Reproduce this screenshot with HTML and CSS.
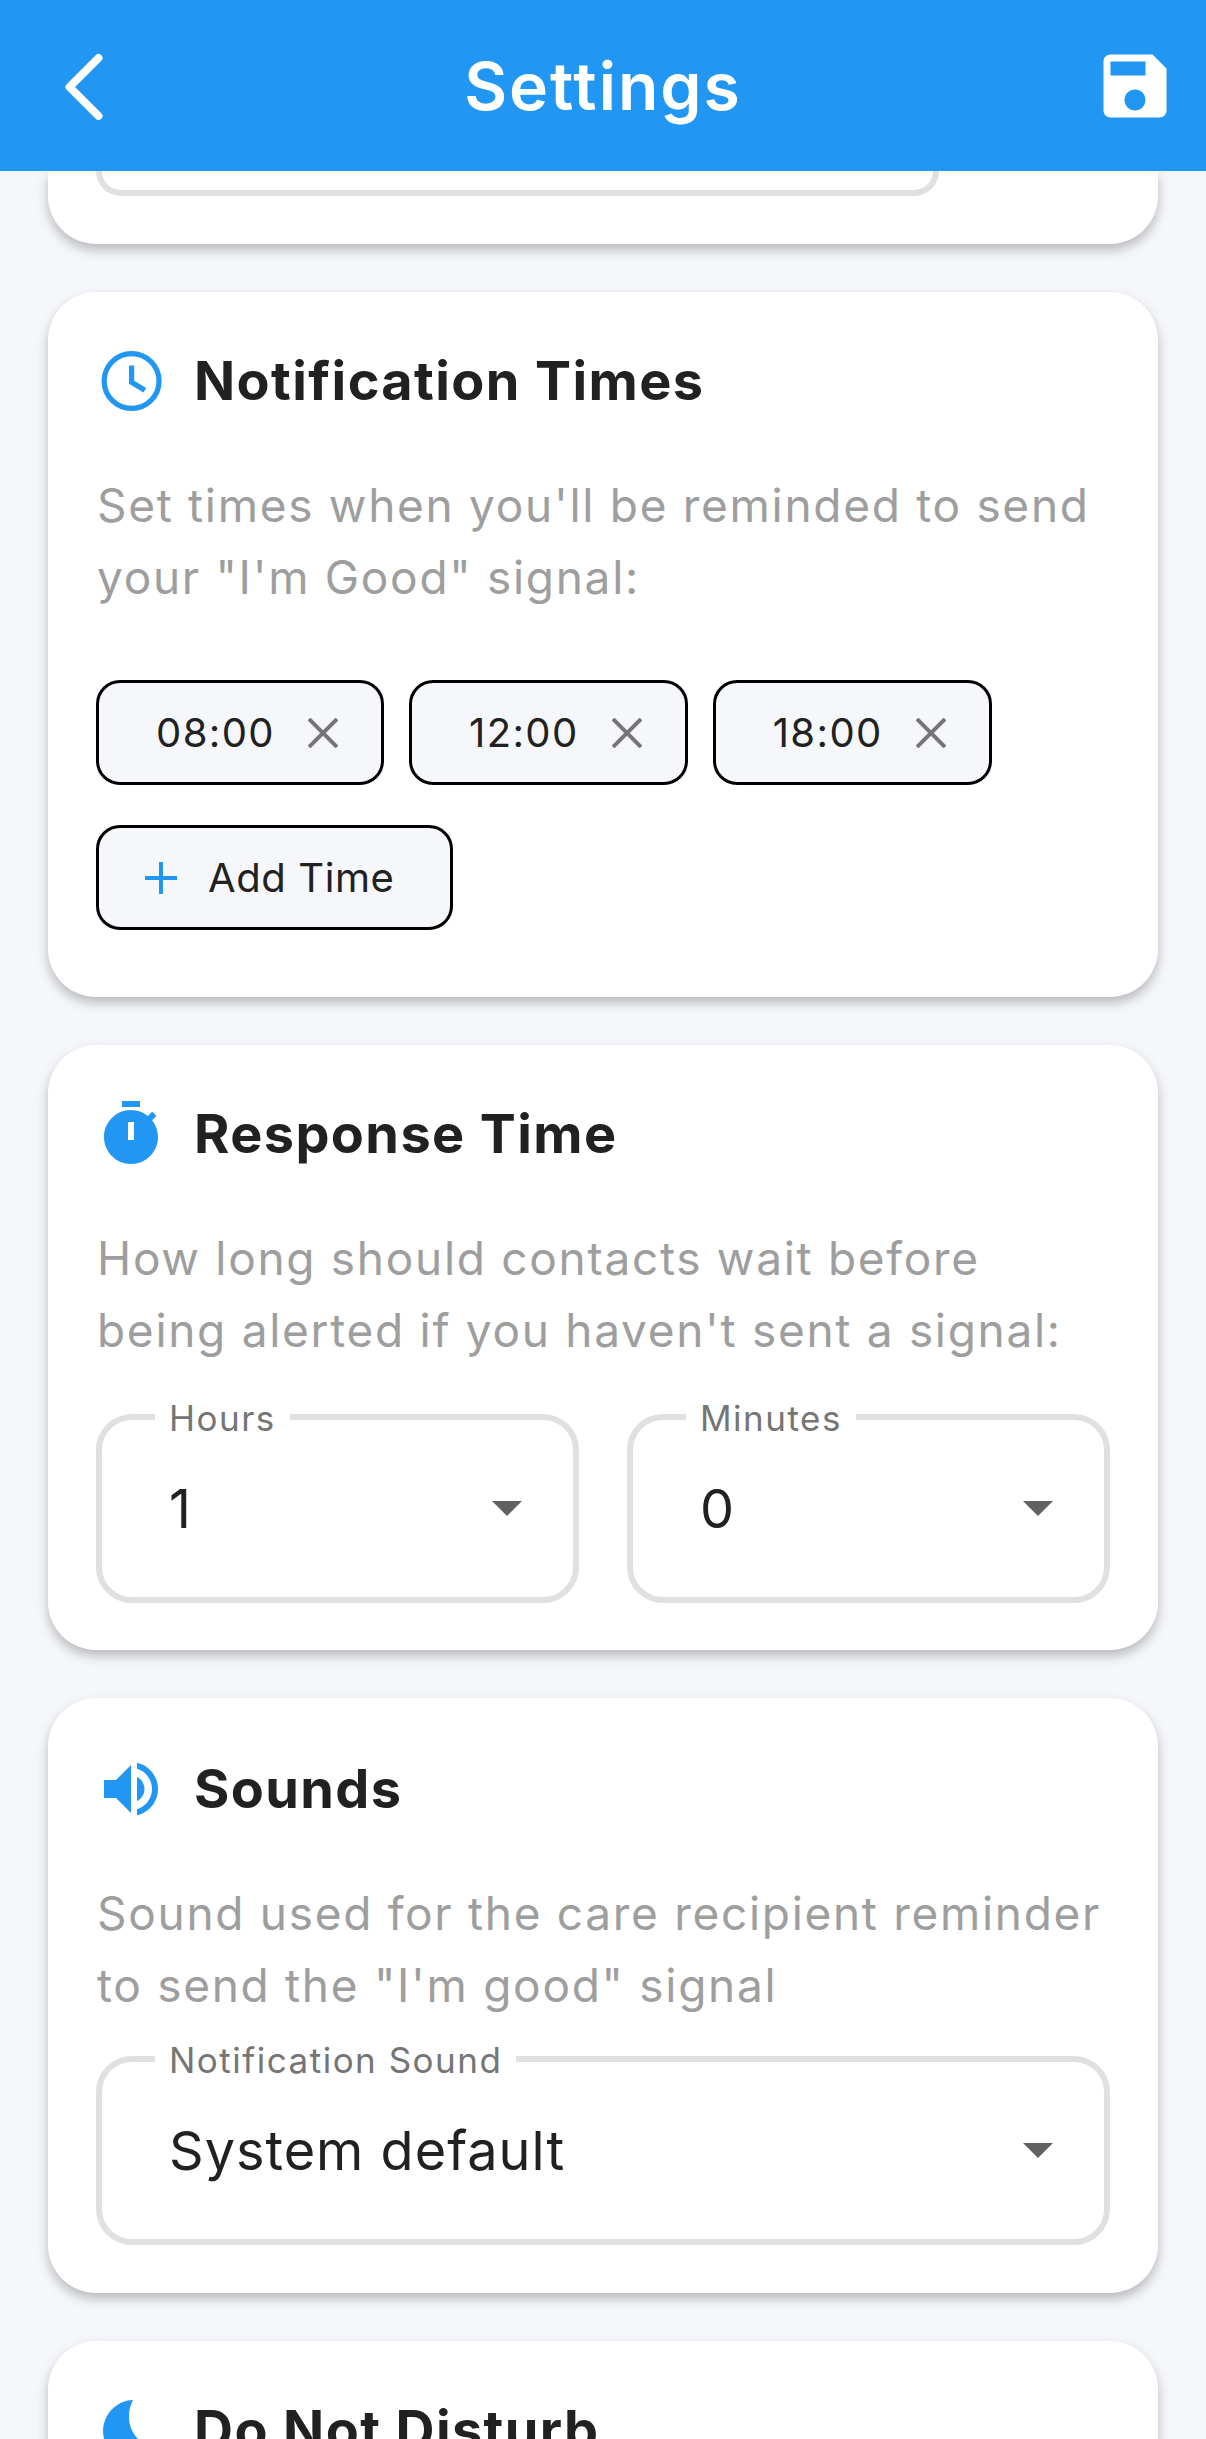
FILE: index.html
```html
<!DOCTYPE html>
<html lang="en">
<head>
    <meta charset="UTF-8">
    <meta name="viewport" content="width=device-width, initial-scale=1.0">
    <title>Settings</title>
    <link rel="stylesheet" href="styles.css">
</head>
<body>
    <header class="app-bar">
        <svg class="back-icon" viewBox="0 0 48 72"><path d="M38.5 8 L9.5 37 L38.5 66"/></svg>
        <h1>Settings</h1>
        <svg class="save-icon" viewBox="0 0 24 24"><path d="M17 3H5c-1.11 0-2 .9-2 2v14c0 1.1.89 2 2 2h14c1.1 0 2-.9 2-2V7l-4-4zm-5 16c-1.66 0-3-1.34-3-3s1.34-3 3-3 3 1.34 3 3-1.34 3-3 3zm3-10H5V5h10v4z"/></svg>
    </header>

    <main class="scroller">
        <section class="card card-clipped">
            <div class="select-stub"></div>
        </section>

        <section class="card">
            <div class="card-title">
                <svg class="card-icon icon-clock" viewBox="0 0 24 24"><circle cx="12.2" cy="12" r="9.15"/><path d="M12.2 6.8v5.600l4.400 2.700"/></svg>
                <h2>Notification Times</h2>
            </div>
            <p class="desc">Set times when you'll be reminded to send your "I'm Good" signal:</p>
            <div class="chips">
                <div class="chip"><span>08:00</span><svg class="chip-x" viewBox="0 0 30 30"><path d="M1 1 L29 29 M29 1 L1 29"/></svg></div>
                <div class="chip"><span>12:00</span><svg class="chip-x" viewBox="0 0 30 30"><path d="M1 1 L29 29 M29 1 L1 29"/></svg></div>
                <div class="chip"><span>18:00</span><svg class="chip-x" viewBox="0 0 30 30"><path d="M1 1 L29 29 M29 1 L1 29"/></svg></div>
                <div class="chip chip-add"><svg class="chip-plus" viewBox="0 0 32 32"><path d="M16 0 V32 M0 16 H32"/></svg><span>Add Time</span></div>
            </div>
        </section>

        <section class="card">
            <div class="card-title">
                <svg class="card-icon" viewBox="0 0 24 24"><path d="M9 1h6v2H9z"/><path d="M19.03 7.39l1.42-1.42c-.43-.51-.9-.99-1.41-1.41l-1.42 1.42C16.07 4.74 14.12 4 12 4c-4.97 0-9 4.03-9 9s4.02 9 9 9 9-4.03 9-9c0-2.12-.74-4.07-1.97-5.61zM13 14h-2V8h2v6z"/></svg>
                <h2>Response Time</h2>
            </div>
            <p class="desc">How long should contacts wait before being alerted if you haven't sent a signal:</p>
            <div class="field-row row-spaced">
                <div class="field">
                    <label>Hours</label>
                    <span class="value">1</span>
                    <i class="caret"></i>
                </div>
                <div class="field">
                    <label>Minutes</label>
                    <span class="value">0</span>
                    <i class="caret"></i>
                </div>
            </div>
        </section>

        <section class="card card-sounds">
            <div class="card-title">
                <svg class="card-icon" viewBox="0 0 24 24"><path d="M3 9v6h4l5 5V4L7 9H3zm13.5 3c0-1.77-1.02-3.29-2.5-4.03v8.05c1.48-.73 2.5-2.25 2.5-4.02zM14 3.23v2.06c2.89.86 5 3.54 5 6.71s-2.11 5.85-5 6.71v2.06c4.01-.91 7-4.49 7-8.77s-2.99-7.86-7-8.77z"/></svg>
                <h2>Sounds</h2>
            </div>
            <p class="desc">Sound used for the care recipient reminder to send the "I'm good" signal</p>
            <div class="field-row">
                <div class="field">
                    <label>Notification Sound</label>
                    <span class="value">System default</span>
                    <i class="caret"></i>
                </div>
            </div>
        </section>

        <section class="card">
            <div class="card-title">
                <svg class="card-icon" viewBox="0 0 24 24"><path d="M12.7 2C6.9 2.2 2.7 7 2.7 12.5 2.7 18 7 22 12.5 22c3.5 0 6.5-1.500 8.500-4.500-5.500.5-9.700-4.500-9.700-10 0-2 .5-3.900 1.400-5.500z"/></svg>
                <h2>Do Not Disturb</h2>
            </div>
        </section>
    </main>
</body>
</html>
```

FILE: styles.css
```css
* { box-sizing: border-box; }
html, body { margin: 0; height: 100%; }
body {
    font-family: Inter, "Liberation Sans", sans-serif;
    background: #f5f7fa;
    color: #212121;
    display: flex;
    flex-direction: column;
    height: 2439px;
    overflow: hidden;
}

.app-bar {
    height: 171px;
    flex: none;
    background: #2196f3;
    display: flex;
    align-items: flex-start;
    justify-content: space-between;
    padding: 44px 29px 0 60px;
}
.app-bar h1 {
    margin: 0;
    color: #fff;
    font-size: 66px;
    line-height: 84px;
    font-weight: 600;
    letter-spacing: 2px;
    position: absolute;
    left: 0;
    right: 0;
    text-align: center;
}
.back-icon { width: 48px; height: 72px; margin-top: 6px; fill: none; stroke: #fff; stroke-width: 8; stroke-linecap: round; stroke-linejoin: round; }
.save-icon { width: 84px; height: 84px; fill: #fff; }

.scroller { flex: 1; overflow: hidden; padding: 0 48px; }

.card {
    background: #fff;
    border-radius: 48px;
    padding: 53px 48px 47px;
    margin-bottom: 48px;
    box-shadow: 0 6px 12px rgba(0, 0, 0, 0.25);
}
.card-clipped { height: 73px; padding-top: 0; border-radius: 0 0 48px 48px; }
.card-sounds { padding-top: 55px; padding-bottom: 48px; }
.select-stub {
    width: 843px;
    height: 25px;
    border: 6px solid #e0e0e0;
    border-top: none;
    border-radius: 0 0 36px 36px;
}

.card-title { display: flex; align-items: center; gap: 27px; height: 72px; margin-bottom: 52px; }
.card-icon { width: 72px; height: 72px; fill: #2196f3; flex: none; margin-left: -1px; }
.icon-clock { fill: none; stroke: #2196f3; stroke-width: 1.75; }
.card-title h2 {
    margin: 0;
    font-size: 54px;
    line-height: 70px;
    font-weight: 700;
    letter-spacing: 1.4px;
    color: #212121;
}

.desc {
    margin: 0 0 0 1px;
    font-size: 46px;
    line-height: 72px;
    letter-spacing: 1.7px;
    color: #9e9e9e;
}

.chips { display: flex; flex-wrap: wrap; gap: 40px 25px; margin-top: 67px; padding-bottom: 20px; }
.chip {
    height: 105px;
    background: #f5f7fa;
    border: 3px solid #000;
    border-radius: 24px;
    display: flex;
    align-items: center;
    gap: 33px;
    padding: 0 43px 0 57px;
    font-size: 40px;
    letter-spacing: 1.4px;
}
.chip-add { padding: 0 55px 0 46px; gap: 31px; letter-spacing: 0.6px; }
.chip-x { width: 30px; height: 30px; fill: none; stroke: #757575; stroke-width: 4; }
.chip-plus { width: 32px; height: 32px; fill: none; stroke: #2196f3; stroke-width: 4; }

.field-row { display: flex; gap: 48px; margin-top: 35px; }
.row-spaced { margin-top: 48px; }
.field {
    position: relative;
    flex: 1;
    height: 189px;
    border: 6px solid #e0e0e0;
    border-radius: 36px;
    display: flex;
    align-items: center;
    justify-content: space-between;
    padding: 0 51px 0 67px;
}
.field label {
    position: absolute;
    top: -20px;
    left: 53px;
    background: #fff;
    padding: 0 14px;
    font-size: 35px;
    line-height: 36px;
    letter-spacing: 1.5px;
    color: #757575;
}
.value { font-size: 54px; letter-spacing: 1px; color: #212121; }
.caret {
    width: 0;
    height: 0;
    border-left: 15px solid transparent;
    border-right: 15px solid transparent;
    border-top: 15px solid #616161;
}
```
